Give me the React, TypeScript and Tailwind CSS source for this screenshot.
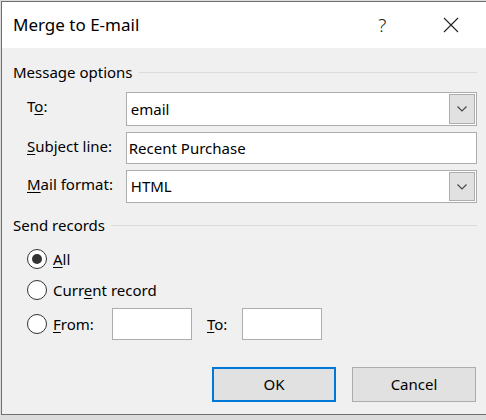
import React from "react";

const font = { fontFamily: '"Noto Sans", "Open Sans", sans-serif' };

function U({ children }: { children: React.ReactNode }) {
  return <span className="underline underline-offset-[2px] decoration-[1px]">{children}</span>;
}

function Chevron() {
  return (
    <svg width="12" height="8" viewBox="0 0 12 8" className="block">
      <path d="M1.5 1.5 L6 6 L10.5 1.5" fill="none" stroke="#444" strokeWidth="1.1" />
    </svg>
  );
}

function Combo({ value, h }: { value: string; h: string }) {
  return (
    <div className={`flex w-[352px] ${h} items-stretch border border-[#adadad] bg-white`}>
      <div className="flex flex-1 items-center pl-[4px] text-[15px] text-black">{value}</div>
      <div className="m-[1px] flex w-[26px] items-center justify-center border border-[#adadad] bg-[#e1e1e1]">
        <Chevron />
      </div>
    </div>
  );
}

function Radio({ checked }: { checked?: boolean }) {
  return (
    <div className="flex h-[20px] w-[20px] items-center justify-center rounded-full border border-[#333] bg-white">
      {checked && <div className="h-[10px] w-[10px] rounded-full bg-[#333]" />}
    </div>
  );
}

export default function App() {
  return (
    <div className="relative h-[420px] w-[486px] overflow-hidden bg-[#dcdcdc]" style={font}>
      <div className="ml-[1px] mt-[1px] flex h-[414px] w-[520px] flex-col border border-[#6f6f6f] bg-[#f0f0f0]">
        {/* title bar */}
        <div className="flex h-[46px] items-center bg-white">
          <div className="ml-[11px] text-[17px] text-black">Merge to E-mail</div>
          <div className="ml-[239px] text-[19px] font-light text-[#222]">?</div>
          <div className="ml-[57px] flex items-center">
            <svg width="16" height="16" viewBox="0 0 16 16">
              <path d="M1 1 L15 15 M15 1 L1 15" stroke="#222" strokeWidth="1.1" fill="none" />
            </svg>
          </div>
        </div>
        {/* body */}
        <div className="flex w-[475px] flex-col pl-[11px] pt-[14px] text-[15px] text-black">
          <div className="flex h-[20px] items-center">
            <span>Message options</span>
            <div className="ml-[6px] h-[1px] flex-1 bg-[#dcdcdc]" />
          </div>
          <div className="mt-[10px] flex flex-col gap-[6px] pl-[14px]">
            <div className="flex items-start">
              <div className="mt-[3px] w-[99px]">
                T<U>o</U>:
              </div>
              <Combo value="email" h="h-[34px]" />
            </div>
            <div className="flex items-start">
              <div className="mt-[3px] w-[99px]">
                <U>S</U>ubject line:
              </div>
              <div className="flex h-[32px] w-[352px] items-center border border-[#adadad] bg-white pl-[2px]">
                Recent Purchase
              </div>
            </div>
            <div className="flex items-start">
              <div className="mt-[3px] w-[99px]">
                <U>M</U>ail format:
              </div>
              <Combo value="HTML" h="h-[33px]" />
            </div>
          </div>
          <div className="mt-[12px] flex h-[20px] items-center">
            <span>Send records</span>
            <div className="ml-[6px] h-[1px] flex-1 bg-[#dcdcdc]" />
          </div>
          <div className="mt-[14px] flex flex-col pl-[14px]">
            <div className="flex h-[20px] items-center gap-[6px]">
              <Radio checked />
              <span>
                <U>A</U>ll
              </span>
            </div>
            <div className="mt-[11px] flex h-[20px] items-center gap-[6px]">
              <Radio />
              <span>
                Curr<U>e</U>nt record
              </span>
            </div>
            <div className="mt-[8px] flex items-center">
              <div className="flex items-center gap-[6px]">
                <Radio />
                <span className="w-[59px]">
                  <U>F</U>rom:
                </span>
              </div>
              <div className="h-[32px] w-[80px] border border-[#adadad] bg-white" />
              <span className="ml-[15px] w-[35px]">
                <U>T</U>o:
              </span>
              <div className="h-[32px] w-[80px] border border-[#adadad] bg-white" />
            </div>
          </div>
          <div className="mt-[27px] flex justify-end gap-[16px] pr-[1px]">
            <button className="flex h-[35px] w-[124px] items-center justify-center border-2 border-[#0078d7] bg-[#e1e1e1] text-[15px] text-black">
              OK
            </button>
            <button className="flex h-[35px] w-[124px] items-center justify-center border border-[#adadad] bg-[#e1e1e1] text-[15px] text-black">
              Cancel
            </button>
          </div>
        </div>
      </div>
    </div>
  );
}
